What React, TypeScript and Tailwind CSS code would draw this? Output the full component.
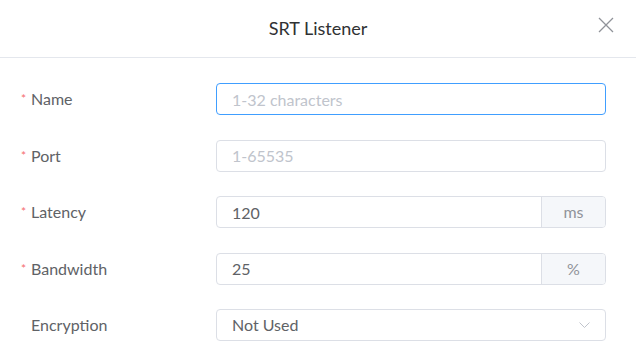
// SRT Listener dialog

const fieldInput =
  "h-full w-full rounded-[4px] border bg-white px-[15px] text-[16px] text-[#606266] placeholder:text-[#c0c4cc] outline-none";

function Label({ text, required }: { text: string; required?: boolean }) {
  return (
    <div className="flex w-[216px] shrink-0 items-center pl-[21px] text-[16px] text-[#606266]">
      <span className="w-[10px] text-[12px] text-[#f56c6c]">{required ? "*" : ""}</span>
      <span>{text}</span>
    </div>
  );
}

function Row({ children }: { children: React.ReactNode }) {
  return <div className="flex h-8 items-center">{children}</div>;
}

function Addon({ value, unit }: { value: string; unit: string }) {
  return (
    <div className="flex h-full w-[390px] overflow-hidden rounded-[4px] border border-[#dcdfe6]">
      <input
        defaultValue={value}
        className="h-full min-w-0 flex-1 px-[15px] text-[16px] text-[#606266] outline-none"
      />
      <div className="flex w-[64px] items-center justify-center border-l border-[#dcdfe6] bg-[#f5f7fa] text-[16px] text-[#909399]">
        {unit}
      </div>
    </div>
  );
}

export default function App() {
  return (
    <div className="h-[363px] w-[636px] bg-white font-['Lato',sans-serif]">
      <div className="relative flex h-[58px] items-center justify-center border-b border-[#e4e7ed]">
        <span className="text-[18px] text-[#303133]">SRT Listener</span>
        <svg
          className="absolute right-[22px] top-[17px]"
          width="16"
          height="16"
          viewBox="0 0 16 16"
          fill="none"
          stroke="#909399"
          strokeWidth="1.3"
        >
          <path d="M1 1L15 15M15 1L1 15" />
        </svg>
      </div>
      <div className="flex flex-col gap-[24.5px] pt-[25px]">
        <Row>
          <Label text="Name" required />
          <div className="h-full w-[390px]">
            <input
              placeholder="1-32 characters"
              className={fieldInput + " border-[#409eff]"}
            />
          </div>
        </Row>
        <Row>
          <Label text="Port" required />
          <div className="h-full w-[390px]">
            <input placeholder="1-65535" className={fieldInput + " border-[#dcdfe6]"} />
          </div>
        </Row>
        <Row>
          <Label text="Latency" required />
          <Addon value="120" unit="ms" />
        </Row>
        <Row>
          <Label text="Bandwidth" required />
          <Addon value="25" unit="%" />
        </Row>
        <Row>
          <Label text="Encryption" />
          <div className="flex h-full w-[390px] items-center justify-between rounded-[4px] border border-[#dcdfe6] px-[15px]">
            <span className="text-[16px] text-[#606266]">Not Used</span>
            <svg width="11" height="6" viewBox="0 0 11 6" fill="none" stroke="#c0c4cc" strokeWidth="1">
              <path d="M0.5 0.5L5.5 5.5L10.5 0.5" />
            </svg>
          </div>
        </Row>
      </div>
    </div>
  );
}
